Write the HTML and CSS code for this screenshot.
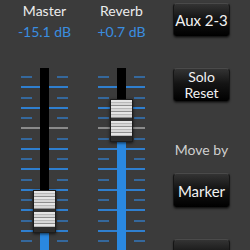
FILE: index.html
```html
<!DOCTYPE html>
<html>
<head>
  <link rel="stylesheet" href="styles.css">
</head>
<body>
  <div class="mixer">
    <div class="channel">
      <div class="name">Master</div>
      <div class="level">-15.1 dB</div>
      <div class="fader">
        <div class="ticks left">
          <i class="s"></i><i class="l"></i><i class="s"></i><i class="l"></i><i class="s"></i><i class="l zero"></i>
          <i class="s"></i><i class="l"></i><i class="s"></i><i class="l"></i><i class="s"></i><i class="l"></i>
          <i class="s"></i><i class="l"></i><i class="s"></i><i class="l"></i><i class="s"></i>
        </div>
        <div class="slot">
          <div class="slot_empty" style="height: 164px"></div>
          <div class="slot_fill"></div>
        </div>
        <div class="ticks right">
          <i class="s"></i><i class="l"></i><i class="s"></i><i class="l"></i><i class="s"></i><i class="l zero"></i>
          <i class="s"></i><i class="l"></i><i class="s"></i><i class="l"></i><i class="s"></i><i class="l"></i>
          <i class="s"></i><i class="l"></i><i class="s"></i><i class="l"></i><i class="s"></i>
        </div>
        <div class="knob" style="top: 122px">
          <div class="grip"></div>
          <div class="groove"></div>
          <div class="grip low"></div>
        </div>
      </div>
    </div>
    <div class="channel">
      <div class="name">Reverb</div>
      <div class="level">+0.7 dB</div>
      <div class="fader">
        <div class="ticks left">
          <i class="s"></i><i class="l"></i><i class="s"></i><i class="l"></i><i class="s"></i><i class="l zero"></i>
          <i class="s"></i><i class="l"></i><i class="s"></i><i class="l"></i><i class="s"></i><i class="l"></i>
          <i class="s"></i><i class="l"></i><i class="s"></i><i class="l"></i><i class="s"></i>
        </div>
        <div class="slot">
          <div class="slot_empty" style="height: 72px"></div>
          <div class="slot_fill"></div>
        </div>
        <div class="ticks right">
          <i class="s"></i><i class="l"></i><i class="s"></i><i class="l"></i><i class="s"></i><i class="l zero"></i>
          <i class="s"></i><i class="l"></i><i class="s"></i><i class="l"></i><i class="s"></i><i class="l"></i>
          <i class="s"></i><i class="l"></i><i class="s"></i><i class="l"></i><i class="s"></i>
        </div>
        <div class="knob" style="top: 31px">
          <div class="grip"></div>
          <div class="groove"></div>
          <div class="grip low"></div>
        </div>
      </div>
    </div>
    <div class="controls">
      <button class="btn aux">Aux 2-3</button>
      <button class="btn solo">Solo<br>Reset</button>
      <div class="caption">Move by</div>
      <button class="btn marker">Marker</button>
      <button class="btn next"></button>
    </div>
  </div>
</body>
</html>
```

FILE: styles.css
```css
html, body {
  margin: 0;
  height: 250px;
  overflow: hidden;
  background-color: #3b3b3b;
  font-family: Lato, "DejaVu Sans", sans-serif;
}
.mixer {
  display: flex;
  padding-left: 6px;
  height: 250px;
  overflow: hidden;
}
.channel {
  width: 77px;
  display: flex;
  flex-direction: column;
}
.channel > * {
  flex-shrink: 0;
}
.name {
  height: 20px;
  padding-top: 2px;
  text-align: center;
  font-size: 14px;
  line-height: 18px;
  color: #ececec;
}
.level {
  height: 46px;
  text-align: center;
  font-size: 14px;
  line-height: 20px;
  color: #3a8ee0;
}
.fader {
  position: relative;
  display: grid;
  grid-template-columns: 19px 9px 19px;
  padding-left: 15px;
  height: 182px;
}
.ticks {
  display: flex;
  flex-direction: column;
  padding-top: 8px;
}
.ticks i {
  display: block;
  flex-shrink: 0;
  height: 2px;
  margin-bottom: 8.25px;
  background-color: #2f7fcf;
}
.ticks i.s {
  width: 11px;
  background-color: #35689c;
}
.ticks i.l {
  width: 19px;
}
.ticks i.zero {
  background-color: #8a8a8a;
}
.ticks.right {
  align-items: flex-end;
}
.slot {
  display: flex;
  flex-direction: column;
}
.slot_empty {
  flex-shrink: 0;
  background-color: #000;
}
.slot_fill {
  flex: 1;
  background-color: #2a88e0;
}
.knob {
  position: absolute;
  left: 27px;
  width: 21px;
  height: 38px;
  padding-bottom: 3px;
  border: 1px solid #1c1c1c;
  background-color: #2c2c2c;
  box-shadow: 0 1px 3px rgba(0, 0, 0, 0.7);
  display: flex;
  flex-direction: column;
}
.grip {
  height: 18px;
  background: repeating-linear-gradient(#e4e4e4 0 2px, #b8b8b8 2px 3px, #d6d6d6 3px 5px, #8e8e8e 5px 6px);
}
.grip.low {
  height: 15px;
}
.groove {
  height: 3px;
  background-color: #333;
}
.controls {
  display: flex;
  flex-direction: column;
  align-items: flex-start;
  padding-left: 13px;
}
.controls > * {
  flex-shrink: 0;
}
.btn {
  width: 57px;
  height: 34px;
  padding: 0;
  border: 1px solid #151515;
  border-top-color: #4a4a4a;
  border-radius: 4px;
  background: linear-gradient(#333 0%, #141414 45%, #000 100%);
  box-shadow: 0 1px 2px rgba(0, 0, 0, 0.5);
  color: #f2f2f2;
  font-family: Lato, "DejaVu Sans", sans-serif;
  font-size: 15px;
  line-height: 16px;
}
.aux {
  margin-top: 3px;
}
.solo {
  margin-top: 31px;
  font-size: 14px;
  line-height: 16px;
}
.caption {
  width: 57px;
  margin-top: 40px;
  text-align: center;
  font-size: 14px;
  line-height: 16px;
  color: #cfcfcf;
}
.marker {
  margin-top: 15px;
  height: 35px;
}
.next {
  margin-top: 31px;
}
```
